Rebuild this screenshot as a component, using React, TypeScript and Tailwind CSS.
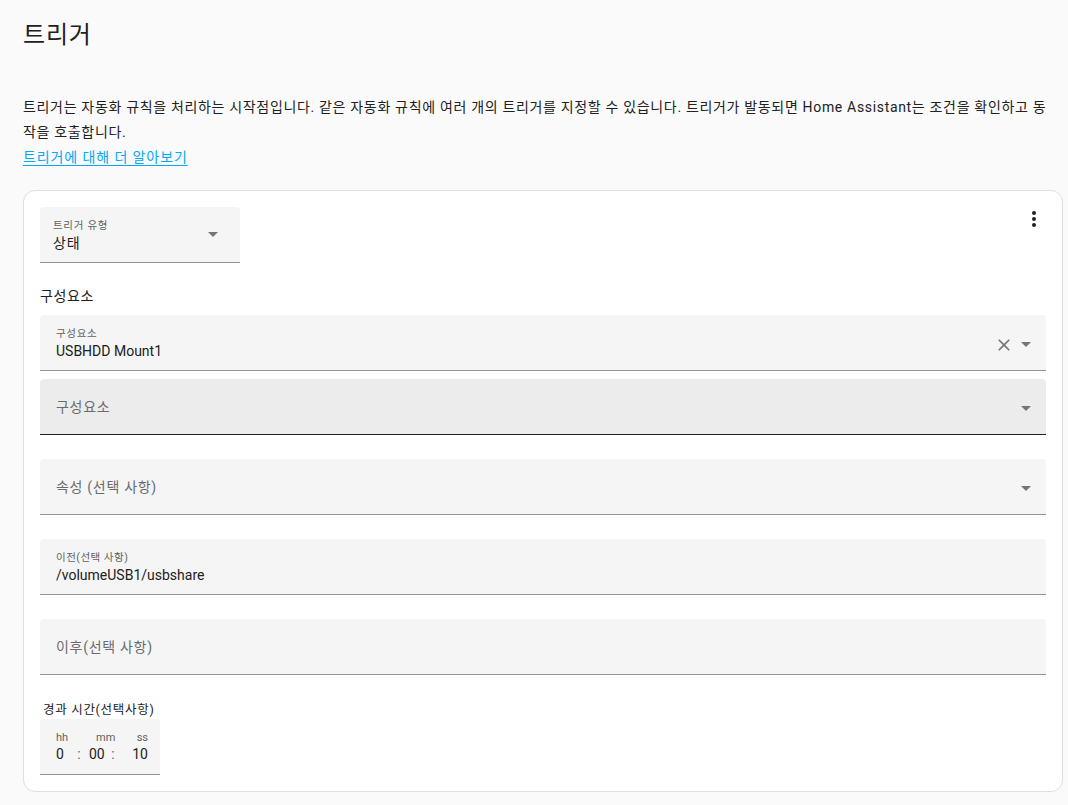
import React from "react";

const FONT = 'Roboto, "Noto Sans CJK KR", "Noto Sans CJK SC", sans-serif';

function MenuDown({ className = "" }: { className?: string }) {
  return (
    <svg viewBox="0 0 24 24" className={className} fill="currentColor">
      <path d="M7,10L12,15L17,10H7Z" />
    </svg>
  );
}

function Close({ className = "" }: { className?: string }) {
  return (
    <svg viewBox="0 0 24 24" className={className} fill="currentColor">
      <path d="M19,6.41L17.59,5L12,10.59L6.41,5L5,6.41L10.59,12L5,17.59L6.41,19L12,13.41L17.59,19L19,17.59L13.41,12L19,6.41Z" />
    </svg>
  );
}

function Dots() {
  return (
    <svg viewBox="0 0 24 24" className="w-6 h-6 text-[#212121]" fill="currentColor">
      <circle cx="12" cy="6" r="2" />
      <circle cx="12" cy="12" r="2" />
      <circle cx="12" cy="18" r="2" />
    </svg>
  );
}

function EmptyField({ label, hover = false, arrow = false }: { label: string; hover?: boolean; arrow?: boolean }) {
  return (
    <div
      className={
        "h-[56px] rounded-t-[4px] flex items-center pl-[16px] pr-[8px] border-b " +
        (hover ? "bg-[#ececec] border-[#212121]" : "bg-[#f5f5f5] border-[#949494]")
      }
    >
      <span className="flex-1 text-[14px] leading-[24px] tracking-[0.7px] text-[#6b6b6b] pt-[1px]">{label}</span>
      {arrow && <MenuDown className="w-6 h-6 text-[#757575] mt-[2px]" />}
    </div>
  );
}

export default function App() {
  return (
    <div className="min-h-screen bg-[#fafafa] text-[#212121]" style={{ fontFamily: FONT }}>
      <div className="pl-[23px] pr-[5px]">
        <h1 className="text-[24px] leading-[32px] pt-[19px] font-normal tracking-[0.8px] text-[#212121]">트리거</h1>
        <p className="mt-[44px] text-[14px] leading-[25px] tracking-[0.67px] text-[#212121]">
          트리거는 자동화 규칙을 처리하는 시작점입니다. 같은 자동화 규칙에 여러 개의 트리거를 지정할 수 있습니다. 트리거가 발동되면 Home Assistant는 조건을 확인하고 동
          <br />
          작을 호출합니다.
        </p>
        <a href="#" className="block w-max text-[14px] leading-[25px] tracking-[0.9px] text-[#03a9f4] underline underline-offset-[3px]">
          트리거에 대해 더 알아보기
        </a>

        <div className="mt-[20px] mb-[14px] bg-white border border-[#e0e0e0] rounded-[12px] p-4">
          <div className="flex justify-between items-start">
            <div className="w-[200px] h-[56px] bg-[#f5f5f5] rounded-t-[4px] border-b border-[#949494] flex items-start pl-[13px] pr-[15px]">
              <div className="flex-1 flex flex-col pt-[11px]">
                <span className="text-[10.5px] leading-[16px] tracking-[0.7px] text-[#616161]">트리거 유형</span>
                <span className="text-[14px] leading-[18px] tracking-[0.8px] text-[#212121]">상태</span>
              </div>
              <MenuDown className="w-6 h-6 text-[#757575] mt-[15px]" />
            </div>
            <Dots />
          </div>

          <div className="mt-[21px] text-[14px] leading-[24px] tracking-[0.6px] text-[#212121]">구성요소</div>

          <div className="mt-[7px] h-[56px] rounded-t-[4px] bg-[#f5f5f5] border-b border-[#949494] flex items-start pl-[16px] pr-[8px]">
            <div className="flex-1 flex flex-col pt-[11px]">
              <span className="text-[10.5px] leading-[16px] tracking-[0.7px] text-[#616161]">구성요소</span>
              <span className="text-[14px] leading-[18px] text-[#212121]">USBHDD Mount1</span>
            </div>
            <Close className="w-5 h-5 text-[#757575] mt-[20px]" />
            <MenuDown className="w-6 h-6 text-[#757575] mt-[17px]" />
          </div>

          <div className="mt-[8px]">
            <EmptyField label="구성요소" hover arrow />
          </div>
          <div className="mt-[24px]">
            <EmptyField label="속성 (선택 사항)" arrow />
          </div>

          <div className="mt-[24px] h-[56px] rounded-t-[4px] bg-[#f5f5f5] border-b border-[#949494] flex flex-col pl-[16px] pt-[11px]">
            <span className="text-[10.5px] leading-[16px] tracking-[0.5px] text-[#616161]">이전(선택 사항)</span>
            <span className="text-[14px] leading-[18px] text-[#212121]">/volumeUSB1/usbshare</span>
          </div>

          <div className="mt-[24px]">
            <EmptyField label="이후(선택 사항)" />
          </div>

          <div className="mt-[27px] pl-[3px] text-[12.5px] leading-[16px] tracking-[0.7px] text-[#212121]">경과 시간(선택사항)</div>
          <div className="mt-[1px] w-[120px] h-[56px] bg-[#f5f5f5] rounded-t-[4px] border-b border-[#949494] pl-[16px] pt-[11px]">
            <div className="grid grid-cols-[20px_6px_28px_6px_32px] grid-rows-[16px_16px]">
              <span className="text-[11px] leading-[16px] text-[#616161]">hh</span>
              <span />
              <span className="text-[11px] leading-[16px] text-[#616161] pl-[14px]">mm</span>
              <span />
              <span className="text-[11px] leading-[16px] text-[#616161] text-right">ss</span>
              <span className="text-[14px] leading-[16px]">0</span>
              <span className="text-[14px] leading-[16px] text-center text-[#616161]">:</span>
              <span className="text-[14px] leading-[16px] pl-[7px]">00</span>
              <span className="text-[14px] leading-[16px] text-center text-[#616161]">:</span>
              <span className="text-[14px] leading-[16px] text-right">10</span>
            </div>
          </div>
        </div>
      </div>
    </div>
  );
}
